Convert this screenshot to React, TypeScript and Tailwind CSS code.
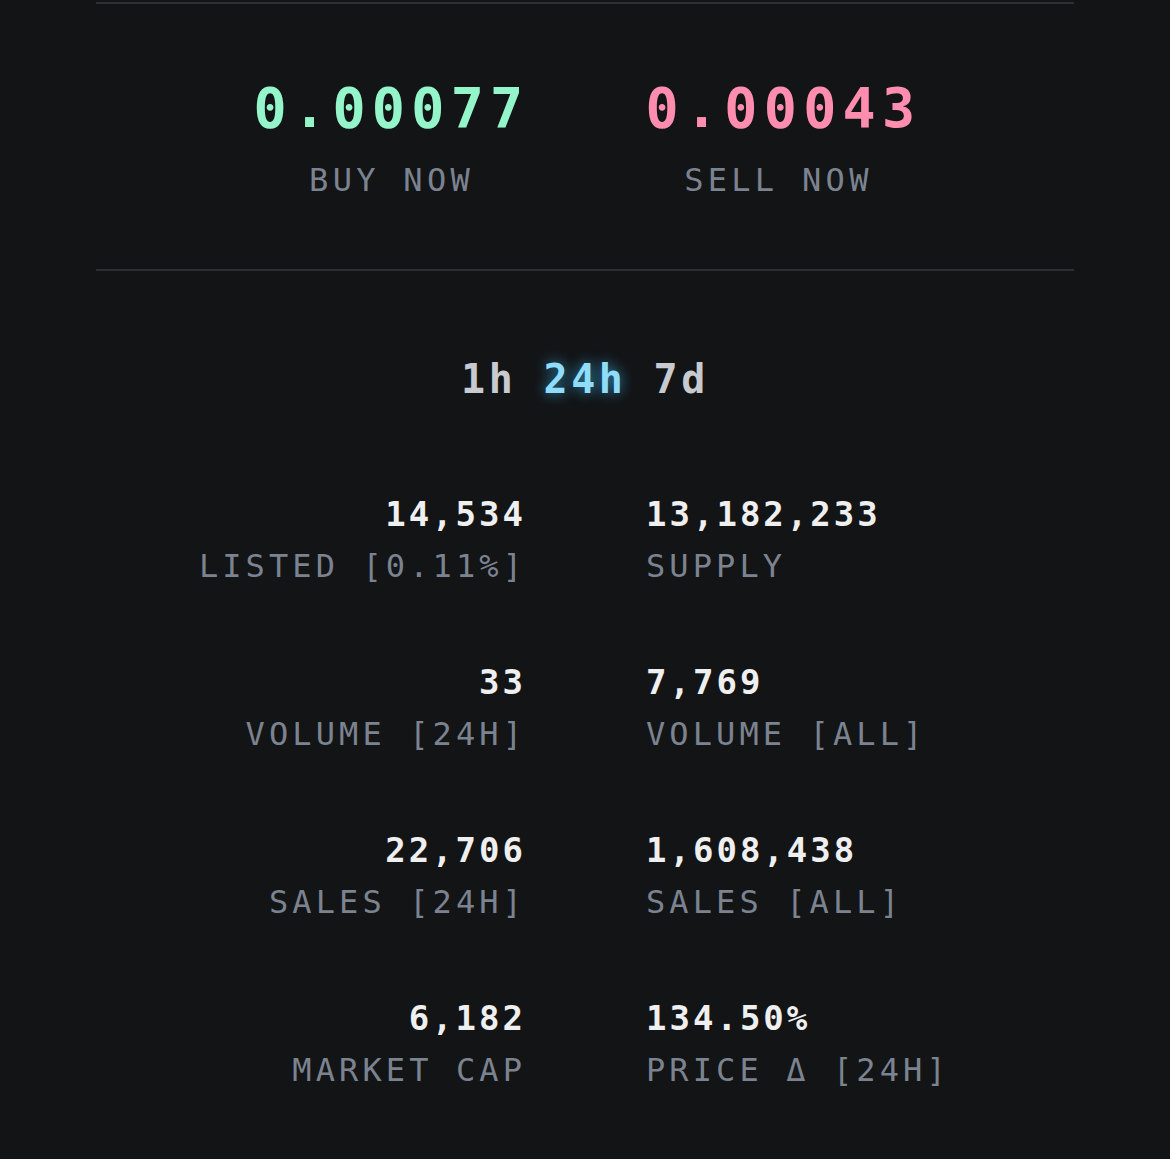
import React from 'react';

const stats = [
  { left: { value: '14,534', label: 'LISTED [0.11%]' }, right: { value: '13,182,233', label: 'SUPPLY' } },
  { left: { value: '33', label: 'VOLUME [24H]' }, right: { value: '7,769', label: 'VOLUME [ALL]' } },
  { left: { value: '22,706', label: 'SALES [24H]' }, right: { value: '1,608,438', label: 'SALES [ALL]' } },
  { left: { value: '6,182', label: 'MARKET CAP' }, right: { value: '134.50%', label: 'PRICE Δ [24H]' } },
];

const Stat = ({ value, label, align }: { value: string; label: string; align: 'left' | 'right' }) => (
  <div className={`flex flex-col ${align === 'right' ? 'items-end text-right' : 'items-start text-left pl-[2px]'}`}>
    <div className="text-[34px] leading-none font-bold tracking-[3px] text-[#efefef]">{value}</div>
    <div className="mt-[19px] text-[32px] leading-none tracking-[4.1px] text-[#7c8390] whitespace-pre">{label}</div>
  </div>
);

export default function App() {
  return (
    <div className="min-h-[1159px] w-full bg-[#131416] font-['DejaVu_Sans_Mono',monospace] pt-[2px]">
      <div className="mx-auto h-[2px] w-[978px] bg-[#2c2f33]" />

      {/* buy / sell */}
      <div className="flex justify-center gap-[116px] pt-[77px] pl-[5px]">
        <div className="flex flex-col items-center">
          <div className="text-[55px] leading-none font-bold tracking-[6.3px] text-[#94f5cb]">0.00077</div>
          <div className="mt-[28px] text-[32px] leading-none tracking-[4.3px] text-[#7c8390] whitespace-pre">BUY NOW</div>
        </div>
        <div className="flex flex-col items-center">
          <div className="text-[55px] leading-none font-bold tracking-[6.3px] text-[#ff8db0]">0.00043</div>
          <div className="mt-[28px] mr-[10px] text-[32px] leading-none tracking-[4.3px] text-[#7c8390] whitespace-pre">SELL NOW</div>
        </div>
      </div>

      <div className="mx-auto mt-[73px] h-[2px] w-[978px] bg-[#2c2f33]" />

      {/* timeframe tabs */}
      <div className="mt-[88px] flex justify-center gap-[27px] text-[40px] leading-none font-bold tracking-[3.6px]">
        <button className="text-[#c8cacf]">1h</button>
        <button className="text-[#8fdcfb] [text-shadow:0_0_14px_rgba(56,189,248,0.75)]">24h</button>
        <button className="text-[#c8cacf]">7d</button>
      </div>

      {/* stats grid */}
      <div className="mt-[98px] grid grid-cols-2 gap-x-[118px] gap-y-[83px] pb-[74px]">
        {stats.map((row, i) => (
          <React.Fragment key={i}>
            <Stat {...row.left} align="right" />
            <Stat {...row.right} align="left" />
          </React.Fragment>
        ))}
      </div>
    </div>
  );
}
